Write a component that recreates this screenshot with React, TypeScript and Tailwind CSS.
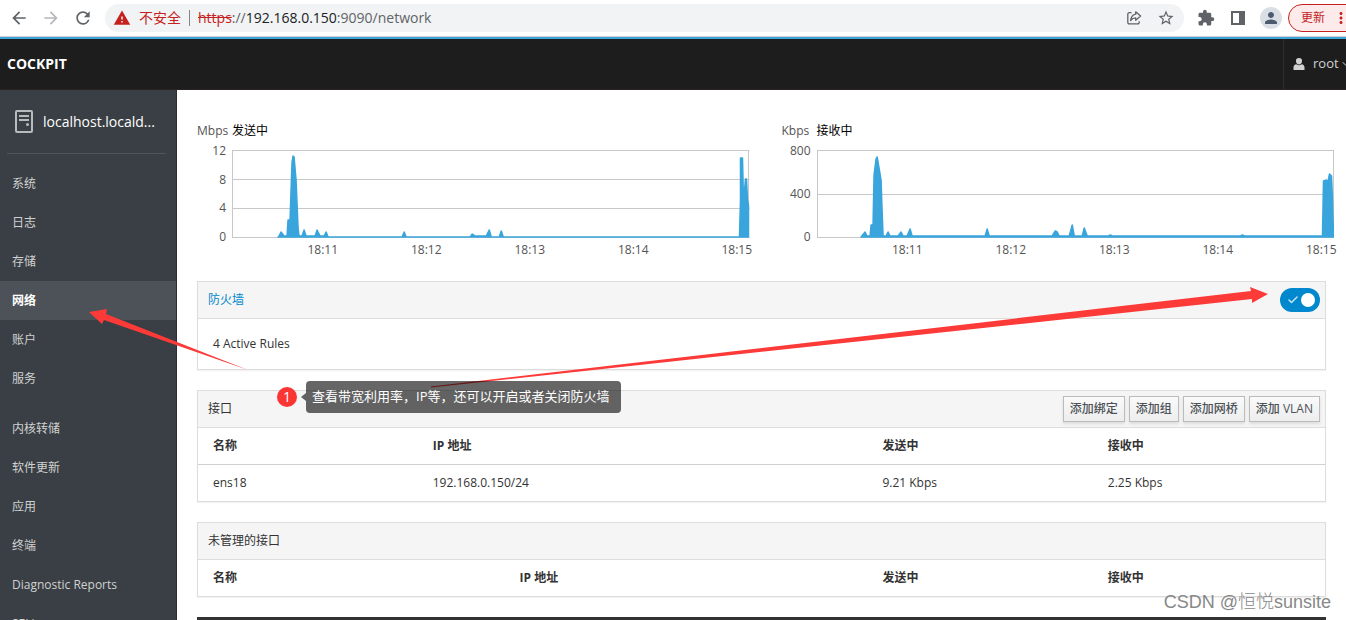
import React, { useState } from "react";
import {
  MdArrowBack,
  MdArrowForward,
  MdExtension,
  MdMoreVert,
  MdPerson,
  MdRefresh,
  MdStarBorder,
  MdWarning,
} from "react-icons/md";
import { Check, ChevronDown } from "lucide-react";

interface ChartProps {
  unit: string;
  title: string;
  ticks: number[];
  points: string;
}

interface Column {
  label: string;
  width: string;
}

const HOURS = ["18:11", "18:12", "18:13", "18:14", "18:15"];

const SYSTEM_LINKS = ["系统", "日志", "存储", "网络", "账户", "服务"];
const TOOL_LINKS = [
  "内核转储",
  "软件更新",
  "应用",
  "终端",
  "Diagnostic Reports",
  "SELinux",
];

const SENT =
  "46,87 47,86 49,82 52,86 55,86 56,70 58,70 59,40 60,12 61,6 62,7 64,30 66,78 67,86 70,86 72,80 74,86 83,86 85,80 88,86 92,86 94,82 96,87 170,87 172,82 174,87 238,87 240,84 243,86 254,86 257,80 259,87 267,87 269,81 271,87 507,87 508,50 508,8 510,8 511,52 513,29 514,29 515,50 516,55 516,87";

const RECEIVED =
  "44,87 48,82 50,86 53,86 54,75 56,75 57,25 59,9 60,7 61,12 64,30 65,60 66,86 69,86 71,82 73,86 81,86 84,82 86,86 90,86 93,79 95,86 168,86 170,79 172,86 235,86 238,81 240,82 242,86 252,86 255,75 257,86 265,86 267,78 270,86 291,86 293,85 295,86 423,86 425,85 427,86 505,86 506,31 509,30 510,34 512,24 514,26 515,50 516,87";

const INTERFACE_COLUMNS: Column[] = [
  { label: "名称", width: "w-[19.5%]" },
  { label: "IP 地址", width: "w-[39.9%]" },
  { label: "发送中", width: "w-[20%]" },
  { label: "接收中", width: "w-auto" },
];

const UNMANAGED_COLUMNS: Column[] = [
  { label: "名称", width: "w-[27.2%]" },
  { label: "IP 地址", width: "w-[32.2%]" },
  { label: "发送中", width: "w-[20%]" },
  { label: "接收中", width: "w-auto" },
];

const BrowserBar: React.FC = () => (
  <div className="flex h-[37px] shrink-0 items-center overflow-hidden border-b border-[#d0d0d0] bg-white text-[#5f6368]">
    <div className="flex items-center gap-3 pl-[9px]">
      <button aria-label="后退" className="flex w-5 justify-center">
        <MdArrowBack className="size-5" />
      </button>
      <button aria-label="前进" className="flex w-5 justify-center text-[#b5b7ba]">
        <MdArrowForward className="size-5" />
      </button>
      <button aria-label="重新加载" className="flex w-5 justify-center">
        <MdRefresh className="size-5" />
      </button>
    </div>

    <div className="ml-3 flex h-7 min-w-0 flex-1 items-center rounded-full bg-[#f1f3f4] pr-[2px] pl-2 text-sm">
      <MdWarning className="mr-2 size-[18px] shrink-0 text-[#c5221f]" />
      <span className="shrink-0 text-[#c5221f]">不安全</span>
      <span className="mx-2 h-4 w-px shrink-0 bg-[#80868b]" />
      <div
        role="textbox"
        aria-label="地址"
        contentEditable
        suppressContentEditableWarning
        className="min-w-0 flex-1 truncate outline-none"
      >
        <span className="text-[#c5221f] line-through">https</span>
        <span>://</span>
        <span className="text-[#202124]">192.168.0.150</span>
        <span>:9090/network</span>
      </div>
      <button aria-label="分享" className="flex w-8 justify-center">
        <svg viewBox="0 0 16 16" className="size-4" fill="none" stroke="currentColor" strokeWidth="1.3">
          <path d="M5.5 2.7H3.2a1.4 1.4 0 0 0-1.4 1.4v8.4a1.4 1.4 0 0 0 1.4 1.4h8.6a1.4 1.4 0 0 0 1.4-1.4v-1.3" />
          <path d="M9.7 1.8 14.6 6l-4.9 4.2V7.8C7.500 7.800 5.900 8.700 4.600 10.500 5.100 7.200 6.700 4.700 9.700 4.200z" strokeLinejoin="round" />
        </svg>
      </button>
      <button aria-label="收藏" className="flex w-8 justify-center">
        <MdStarBorder className="size-[18px]" />
      </button>
    </div>

    <div className="flex items-center pl-1">
      <button aria-label="扩展程序" className="flex w-9 justify-center">
        <MdExtension className="size-[18px]" />
      </button>
      <button aria-label="侧边栏" className="flex w-7 justify-center">
        <svg viewBox="0 0 16 16" className="size-4">
          <path fill="currentColor" fillRule="evenodd" d="M1 1h14v14H1zM3 3v10h6V3z" />
        </svg>
      </button>
      <button
        aria-label="用户"
        className="ml-2 flex size-[22px] items-center justify-center rounded-full bg-[#dadfe6] text-[#4d5b70]"
      >
        <MdPerson className="size-[18px]" />
      </button>
    </div>
    <button className="-mr-4 ml-[6px] flex h-7 w-[74px] shrink-0 items-center rounded-full border border-[#c5221f] bg-[#fcebea] pl-3 text-xs text-[#c5221f]">
      更新
      <MdMoreVert className="ml-[7px] size-[18px] shrink-0" />
    </button>
  </div>
);

const TopBar: React.FC = () => (
  <header className="flex h-[53px] shrink-0 items-stretch justify-between overflow-hidden border-t-2 border-b border-t-[#39a5dc] border-b-[#2b2425] bg-[#1d1d1d] text-white">
    <span className="flex items-center pl-[7px] text-sm font-bold">COCKPIT</span>
    <button className="-mr-2 flex w-[71px] items-center border-l border-[#2e2e2e] pl-[9px] text-[13px] text-[#d1d1d1]">
      <svg viewBox="0 0 12 12" className="mr-2 size-3 shrink-0" fill="currentColor">
        <path d="M6 0a3 3 0 0 1 3 3.200C9 5 7.800 6.500 6 6.500S3 5 3 3.200A3 3 0 0 1 6 0zM.5 12V9.500C.5 7.700 1.600 6.600 3.400 6.300c1.600 1.200 3.600 1.200 5.200 0 1.800.3 2.900 1.400 2.900 3.200V12z" />
      </svg>
      root
      <ChevronDown className="ml-px size-3 shrink-0" />
    </button>
  </header>
);

const NavList: React.FC<{ links: string[] }> = ({ links }) => (
  <ul>
    {links.map((link) => (
      <li key={link}>
        <a
          href="#"
          className={
            link === "网络"
              ? "flex h-[39px] items-center bg-[#4d5258] pl-3 font-bold text-white"
              : "flex h-[39px] items-center pl-3 text-[#d1d1d1]"
          }
        >
          {link}
        </a>
      </li>
    ))}
  </ul>
);

const Sidebar: React.FC = () => (
  <nav className="w-[177px] shrink-0 overflow-hidden border-r border-[#292e34] bg-[#393f44] text-xs">
    <a
      href="#"
      className="mr-[10px] ml-[7px] flex h-16 items-center gap-[10px] border-b border-[#50555b] pl-2 text-sm text-white"
    >
      <svg viewBox="0 0 18 23" className="h-[23px] w-[18px] shrink-0">
        <rect x="1" y="1" width="16" height="21" rx="1" fill="none" stroke="#b8bbbd" strokeWidth="2" />
        <path d="M4 6h10M4 10h10" stroke="#b8bbbd" strokeWidth="2" />
        <circle cx="12.500" cy="14.500" r="1.500" fill="#b8bbbd" />
      </svg>
      localhost.locald...
    </a>
    <div className="flex flex-col gap-[11px] pt-[10px]">
      <NavList links={SYSTEM_LINKS} />
      <NavList links={TOOL_LINKS} />
    </div>
  </nav>
);

const TrafficChart: React.FC<ChartProps> = ({ unit, title, ticks, points }) => (
  <section className="min-w-0 flex-1 pr-3 pl-5">
    <h2 className="flex h-5 items-center">
      <span className="w-[35px] text-[#545454]">{unit}</span>
      <span className="text-black">{title}</span>
    </h2>
    <div className="mt-[9px] flex text-[#545454]">
      <div className="-mt-[7px] flex h-[102px] w-[35px] flex-col justify-between pr-[6px] text-right leading-4">
        {ticks.map((tick) => (
          <span key={tick}>{tick}</span>
        ))}
      </div>
      <div className="min-w-0 flex-1">
        <svg viewBox="0 0 517 88" preserveAspectRatio="none" className="h-[88px] w-full">
          {ticks.map((tick, i) => {
            const y = Math.round((i * 87) / (ticks.length - 1)) + 0.5;
            return <line key={tick} x1="0" x2="517" y1={y} y2={y} stroke="#c8c8c8" />;
          })}
          <path d="M.5 0V88M516 0V88" stroke="#c8c8c8" />
          <polygon points={points} fill="#39a5dc" stroke="#39a5dc" strokeWidth="1.500" strokeLinejoin="round" />
        </svg>
        <div className="-mr-[39px] ml-[39px] flex pt-1 leading-4">
          {HOURS.map((hour) => (
            <span key={hour} className="w-1/5 text-center">
              {hour}
            </span>
          ))}
        </div>
      </div>
    </div>
  </section>
);

const Panel: React.FC<{
  title: React.ReactNode;
  actions?: React.ReactNode;
  children: React.ReactNode;
}> = ({ title, actions, children }) => (
  <section className="mb-5 border border-[#ddd] bg-white shadow-[0_1px_1px_rgba(0,0,0,0.05)]">
    <div className="flex h-[37px] items-center justify-between border-b border-[#ddd] bg-[#f5f5f5] pr-[5px] pl-[10px]">
      <h3>{title}</h3>
      {actions}
    </div>
    {children}
  </section>
);

const DataTable: React.FC<{ columns: Column[]; rows: string[][] }> = ({ columns, rows }) => (
  <table className="w-full table-fixed text-left">
    <thead>
      <tr>
        {columns.map((col) => (
          <th key={col.label} className={`${col.width} h-9 pl-[15px] font-bold`}>
            {col.label}
          </th>
        ))}
      </tr>
    </thead>
    <tbody>
      {rows.map((row) => (
        <tr key={row[0]} className="border-t border-[#d1d1d1]">
          {row.map((cell) => (
            <td key={cell} className="h-[37px] pl-[15px]">
              {cell}
            </td>
          ))}
        </tr>
      ))}
    </tbody>
  </table>
);

const AddButton: React.FC<{ children: React.ReactNode }> = ({ children }) => (
  <button className="h-[26px] border border-[#bbb] bg-linear-to-b from-[#fafafa] to-[#ededed] px-[6px] font-medium text-[#4d5258] shadow-[0_2px_3px_rgba(3,3,3,0.1)]">
    {children}
  </button>
);

const Annotations: React.FC = () => (
  <>
    <svg
      viewBox="0 0 1346 620"
      className="pointer-events-none absolute top-0 left-0 h-[620px] w-[1346px]"
      fill="#fc3a38"
    >
      <polygon points="89,312 107,309 106,314 248,370 104,320 102,324" />
      <polygon points="1268,294 1250,287 1251,291 431,386.500 431,387.500 1252,299 1252,303" />
    </svg>
    <div className="absolute top-[381px] left-[277px] flex items-center text-[13px] text-white">
      <span className="flex size-5 items-center justify-center rounded-full bg-[#fa3534] text-sm">1</span>
      <span className="ml-1 border-y-4 border-r-[5px] border-y-transparent border-r-black/60" />
      <span className="h-8 rounded-sm bg-black/60 pr-3 pl-[6px] leading-[30px] whitespace-nowrap">
        查看带宽利用率，IP等，还可以开启或者关闭防火墙
      </span>
    </div>
    <span className="absolute right-[15px] bottom-1 font-['Liberation_Sans','Noto_Sans_CJK_SC',sans-serif] text-lg leading-7 font-light text-[#888]">
      CSDN @恒悦sunsite
    </span>
  </>
);

const App: React.FC = () => {
  const [firewallOn, setFirewallOn] = useState(true);

  return (
    <div className="relative flex h-screen flex-col overflow-hidden bg-white font-['Open_Sans','Noto_Sans_CJK_SC',sans-serif]">
      <BrowserBar />
      <TopBar />
      <div className="flex min-h-0 flex-1">
        <Sidebar />
        <main className="min-w-0 flex-1 overflow-hidden text-xs text-[#333]">
          {/* Traffic */}
          <div className="flex pt-[31px]">
            <TrafficChart unit="Mbps" title="发送中" ticks={[12, 8, 4, 0]} points={SENT} />
            <TrafficChart unit="Kbps" title="接收中" ticks={[800, 400, 0]} points={RECEIVED} />
          </div>

          <div className="px-5 pt-[23px]">
            {/* Firewall */}
            <Panel
              title={
                <a href="#" className="text-[#0088ce]">
                  防火墙
                </a>
              }
              actions={
                <label className="flex h-6 w-10 cursor-pointer items-center justify-between rounded-full bg-[#0088ce] pr-[5px] pl-[7px]">
                  <input
                    type="checkbox"
                    role="switch"
                    aria-label="防火墙"
                    checked={firewallOn}
                    onChange={(e) => setFirewallOn(e.target.checked)}
                    className="sr-only"
                  />
                  <Check className="size-3 text-[#c5e5f5]" strokeWidth={3} />
                  <span className="size-[14px] rounded-full bg-white" />
                </label>
              }
            >
              <p className="px-[15px] py-4 leading-[18px]">4 Active Rules</p>
            </Panel>

            {/* Interfaces */}
            <Panel
              title="接口"
              actions={
                <div className="flex gap-1">
                  <AddButton>添加绑定</AddButton>
                  <AddButton>添加组</AddButton>
                  <AddButton>添加网桥</AddButton>
                  <AddButton>添加 VLAN</AddButton>
                </div>
              }
            >
              <DataTable
                columns={INTERFACE_COLUMNS}
                rows={[["ens18", "192.168.0.150/24", "9.21 Kbps", "2.25 Kbps"]]}
              />
            </Panel>

            {/* Unmanaged interfaces */}
            <Panel title="未管理的接口">
              <DataTable columns={UNMANAGED_COLUMNS} rows={[]} />
            </Panel>

            <div className="h-10 bg-[#333]" />
          </div>
        </main>
      </div>
      <Annotations />
    </div>
  );
};

export default App;
